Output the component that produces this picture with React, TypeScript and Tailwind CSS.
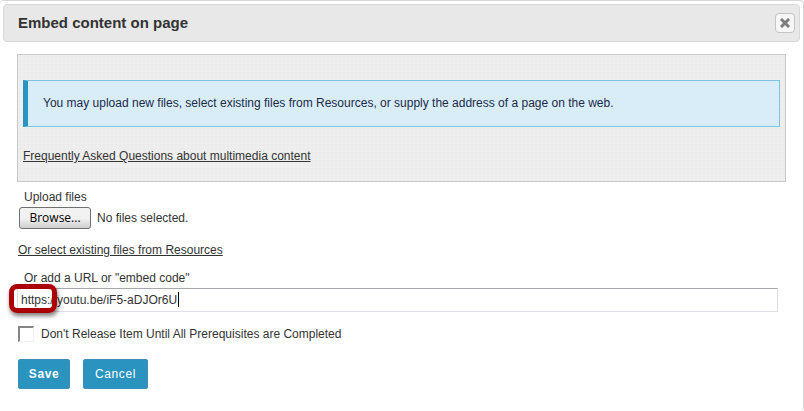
import { useState } from "react";

function CloseIcon() {
  return (
    <svg width="10" height="10" viewBox="0 0 10 10" aria-hidden="true">
      <path d="M2 2L8 8M8 2L2 8" stroke="#7d7d7d" strokeWidth="3" strokeLinecap="square" />
    </svg>
  );
}

function DialogHeader() {
  return (
    <header className="mx-[3px] mt-[3px] flex h-[38px] items-center justify-between rounded-[4px] border border-[#d8d8d8] bg-[#e8e8e8] pr-1 pl-[14px]">
      <h1 className="text-[15px] leading-5 font-bold text-[#333333]">Embed content on page</h1>
      <button
        type="button"
        aria-label="Close"
        className="flex size-5 items-center justify-center rounded-[4px] border border-[#c4c4c4] bg-[#f6f6f6]"
      >
        <CloseIcon />
      </button>
    </header>
  );
}

function InfoPanel() {
  return (
    <section className="mr-2 border border-[#c8c8c8] bg-[#eeeeee] bg-[radial-gradient(#ebebeb_1px,transparent_1px)] bg-size-[4px_4px] px-[5px] pt-[25px] pb-[15px]">
      <p className="border border-l-5 border-[#7cc4e4] border-l-[#2a93c0] bg-[#d9edf8] px-[15px] pt-3 pb-[13px] text-[#1c2b4a]">
        You may upload new files, select existing files from Resources, or supply the address of a page on the web.
      </p>
      <a href="#faq" className="mt-[19px] block w-fit underline underline-offset-1">
        Frequently Asked Questions about multimedia content
      </a>
    </section>
  );
}

export default function App() {
  const [url, setUrl] = useState("https://youtu.be/iF5-aDJOr6U");
  const [hold, setHold] = useState(false);

  return (
    <main className="min-h-screen rounded-[4px] border-t border-r border-[#d8d8d8] bg-white font-['Liberation_Sans',Arial,sans-serif] text-[12px] leading-5 text-[#333333]">
      <DialogHeader />
      <form className="pt-3 pr-[9px] pl-[17px]" onSubmit={(e) => e.preventDefault()}>
        <InfoPanel />

        <label htmlFor="upload" className="mt-[5px] ml-[7px] block w-fit">
          Upload files
        </label>
        <div className="ml-[2px] flex h-[22px] items-center gap-[6px]">
          <button
            id="upload"
            type="button"
            className="h-[22px] w-[72px] rounded-[3px] border border-[#707070] bg-linear-to-b from-[#f2f2f2] from-50% to-[#d0d0d0] font-['Open_Sans','Noto_Sans',sans-serif] text-[12px] leading-5 text-black"
          >
            Browse...
          </button>
          <span>No files selected.</span>
        </div>

        <a href="#resources" className="mt-[11px] ml-px block w-fit underline underline-offset-1">
          Or select existing files from Resources
        </a>

        <label htmlFor="url" className="mt-2 ml-[7px] block w-fit">
          Or add a URL or "embed code"
        </label>
        <div className="relative mr-4">
          <input
            id="url"
            type="text"
            value={url}
            onChange={(e) => setUrl(e.target.value)}
            className="block h-6 w-full border border-[#dcdfe4] border-t-[#a8a8ac] bg-white px-[3px] text-[#333333] outline-none"
          />
          <span className="absolute top-1 left-[161px] h-[15px] w-px bg-black" />
          <span className="absolute -top-1 -left-2 h-[29px] w-12 rounded-[8px] border-5 border-[#ab0006] shadow-[1px_3px_4px_rgba(0,0,0,0.5)]" />
        </div>

        <div className="mt-3 flex items-center gap-[7px]">
          <input
            id="hold"
            type="checkbox"
            checked={hold}
            onChange={(e) => setHold(e.target.checked)}
            className="ml-px size-4 appearance-none border-t-2 border-r border-b border-l-2 border-[#f0f0f0] border-t-[#858585] border-l-[#858585] bg-white checked:bg-[#2a93c0]"
          />
          <label htmlFor="hold">Don't Release Item Until All Prerequisites are Completed</label>
        </div>

        <div className="mt-[15px] ml-px flex gap-[13px]">
          <button type="submit" className="h-[30px] w-[52px] rounded-[2px] border border-[#3d8fba] bg-[#2a93c0] font-bold tracking-wider text-white">
            Save
          </button>
          <button type="button" className="h-[30px] w-[65px] rounded-[2px] border border-[#3d8fba] bg-[#2a93c0] tracking-wider text-white">
            Cancel
          </button>
        </div>
      </form>
    </main>
  );
}
